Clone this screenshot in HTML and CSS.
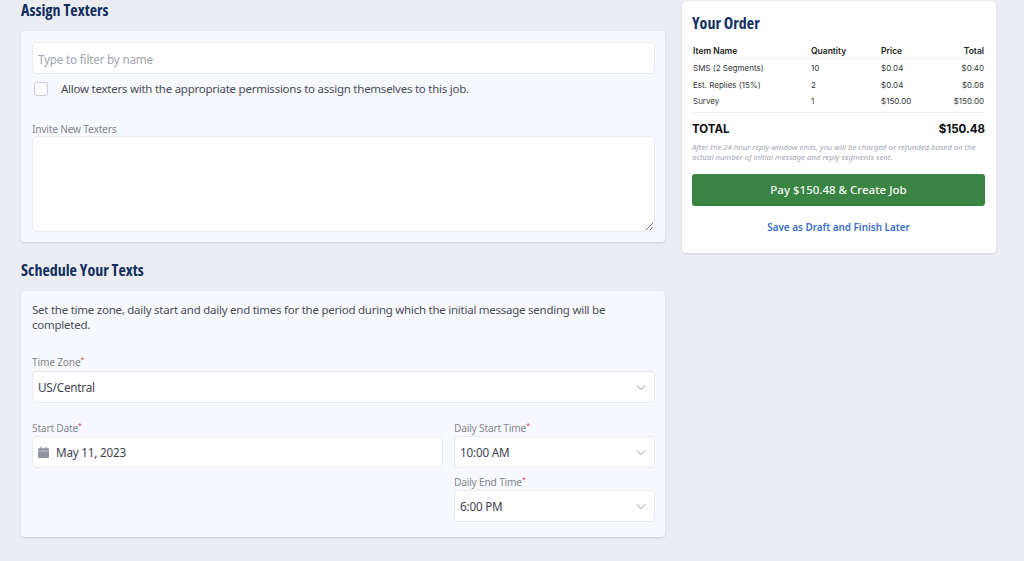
FILE: index.html
```html
<!DOCTYPE html>
<html lang="en">
<head>
<meta charset="utf-8">
<title>Create Job</title>
<link rel="stylesheet" href="styles.css">
</head>
<body>
<div class="layout">
  <main class="main">
    <h2 class="heading first">Assign Texters</h2>
    <section class="card assign">
      <input class="field" type="text" placeholder="Type to filter by name">
      <label class="check-row"><input class="check" type="checkbox"><span>Allow texters with the appropriate permissions to assign themselves to this job.</span></label>
      <div class="label invite-label">Invite New Texters</div>
      <textarea class="area"></textarea>
    </section>
    <h2 class="heading second">Schedule Your Texts</h2>
    <section class="card schedule">
      <p class="intro">Set the time zone, daily start and daily end times for the period during which the initial message sending will be completed.</p>
      <div class="label tz-label">Time Zone<sup class="req">*</sup></div>
      <div class="field select"><span>US/Central</span><svg class="chev" viewBox="0 0 12 8"><path d="M1 1.500 6 6.500 11 1.500" fill="none" stroke="#8b8f9c" stroke-width="1.100"/></svg></div>
      <div class="date-grid">
        <div>
          <div class="label">Start Date<sup class="req">*</sup></div>
          <div class="field date"><svg class="cal" viewBox="0 0 12 12"><path fill="#8f929f" d="M2.500 0h1.400v1.300h4.200V0h1.400v1.300H11a1 1 0 0 1 1 1V4H0V2.300a1 1 0 0 1 1-1h1.500zM0 4.700h12V11a1 1 0 0 1-1 1H1a1 1 0 0 1-1-1z"/></svg><span>May 11, 2023</span></div>
        </div>
        <div class="times">
          <div>
            <div class="label">Daily Start Time<sup class="req">*</sup></div>
            <div class="field select"><span>10:00 AM</span><svg class="chev" viewBox="0 0 12 8"><path d="M1 1.500 6 6.500 11 1.500" fill="none" stroke="#8b8f9c" stroke-width="1.100"/></svg></div>
          </div>
          <div>
            <div class="label">Daily End Time<sup class="req">*</sup></div>
            <div class="field select"><span>6:00 PM</span><svg class="chev" viewBox="0 0 12 8"><path d="M1 1.500 6 6.500 11 1.500" fill="none" stroke="#8b8f9c" stroke-width="1.100"/></svg></div>
          </div>
        </div>
      </div>
    </section>
  </main>
  <aside class="order">
    <h2 class="heading order-title">Your Order</h2>
    <table class="items">
      <thead>
        <tr><th class="c-name">Item Name</th><th class="c-qty">Quantity</th><th class="c-price">Price</th><th class="c-total">Total</th></tr>
      </thead>
      <tbody>
        <tr><td>SMS (2 Segments)</td><td>10</td><td>$0.04</td><td class="c-total">$0.40</td></tr>
        <tr><td>Est. Replies (15%)</td><td>2</td><td>$0.04</td><td class="c-total">$0.08</td></tr>
        <tr><td>Survey</td><td>1</td><td>$150.00</td><td class="c-total">$150.00</td></tr>
      </tbody>
    </table>
    <div class="total"><span>TOTAL</span><span>$150.48</span></div>
    <p class="note">After the 24 hour reply window ends, you will be charged or refunded based on the actual number of initial message and reply segments sent.</p>
    <button class="pay" type="button">Pay $150.48 &amp; Create Job</button>
    <a class="draft" href="#">Save as Draft and Finish Later</a>
  </aside>
</div>
</body>
</html>
```
FILE: styles.css
```css
* { box-sizing: border-box; }
html, body { height: 100%; }
body {
  margin: 0;
  height: 561px;
  overflow: hidden;
  background: #ecedf3;
  font-family: "Noto Sans", "Open Sans", sans-serif;
  color: #3f4350;
}
.layout {
  display: grid;
  grid-template-columns: 644px 314px;
  column-gap: 17px;
  align-items: start;
  padding: 1px 0 0 21px;
}
.heading {
  margin: 0;
  font-family: "Open Sans", sans-serif;
  font-stretch: 75%;
  font-weight: 700;
  font-size: 16px;
  line-height: 20px;
  color: #12305f;
}
.first { margin-bottom: 11px; margin-top: -1px; }
.second { margin: 18px 0 11px; }
.card {
  background: #f8f9fe;
  border-radius: 4px;
  box-shadow: 0 1px 2px rgba(60, 64, 90, .18);
  padding: 11px 10px 10px 11px;
}
.field {
  display: block;
  width: 100%;
  height: 32px;
  background: #fff;
  border: 1px solid #e8eaf1;
  border-radius: 4px;
  padding: 1px 5px 0;
  font-family: inherit;
  font-size: 11.700px;
  letter-spacing: -.2px;
  color: #3f4350;
  outline: none;
}
.field::placeholder { color: #a3a6b2; opacity: 1; }
.check-row {
  display: flex;
  align-items: center;
  gap: 13px;
  height: 15px;
  margin: 7px 0 0 2px;
  font-size: 11.500px;
  letter-spacing: -.25px;
  color: #484c58;
}
.check {
  appearance: none;
  flex: none;
  width: 14px;
  height: 14px;
  margin: 0;
  background: #fff;
  border: 1px solid #c9ccd6;
  border-radius: 3px;
}
.label {
  font-size: 10.200px;
  letter-spacing: -.2px;
  line-height: 14px;
  color: #83868f;
  margin-bottom: 1px;
}
.invite-label { margin-top: 26px; margin-bottom: 0; }
.area {
  display: block;
  width: 100%;
  height: 96px;
  background: #fff;
  border: 1px solid #e8eaf1;
  border-radius: 4px;
  outline: none;
  resize: vertical;
}
.schedule { padding-bottom: 15px; }
.intro {
  margin: 0;
  font-size: 11.500px;
  letter-spacing: -.25px;
  line-height: 15px;
  color: #484c58;
}
.tz-label { margin-top: 23px; margin-bottom: 2px; }
.req { color: #e5405e; font-size: 7px; line-height: 0; vertical-align: 4px; }
.select {
  display: flex;
  align-items: center;
  justify-content: space-between;
  padding-top: 0;
  padding-right: 8px;
}
.chev { width: 10px; height: 7px; flex: none; }
.date-grid {
  display: grid;
  grid-template-columns: 411px 201px;
  column-gap: 11px;
  margin-top: 18px;
}
.times { display: flex; flex-direction: column; gap: 7px; }
.date { display: flex; align-items: center; gap: 7px; padding-top: 0; }
.cal { width: 11px; height: 11px; flex: none; }
.order {
  height: 252px;
  background: #fff;
  border-radius: 4px;
  box-shadow: 0 1px 2px rgba(60, 64, 90, .15);
  padding: 12px 11px 0 10px;
}
.order-title { margin-bottom: 11px; }
.items {
  width: 100%;
  border-collapse: collapse;
  table-layout: fixed;
  font-family: Inter, "Liberation Sans", sans-serif;
  font-size: 8px;
  color: #33353b;
}
.items th, .items td { padding: 2px 1px 0; height: 17px; text-align: left; }
.items th { font-size: 8.500px; font-weight: 600; color: #1c1d21; height: 14px; padding: 0 1px; border-bottom: 1px solid #f0f1f4; }
.items tbody tr:last-child td { border-bottom: 1px solid #f0f1f4; height: 20px; padding-bottom: 3px; }
.items .c-name { width: 118px; }
.items .c-qty { width: 70px; }
.items .c-price { width: 55px; }
.items .c-total { text-align: right; }
.total {
  display: flex;
  justify-content: space-between;
  margin-top: 8px;
  font-family: Inter, "Liberation Sans", sans-serif;
  font-size: 11.500px;
  line-height: 16px;
  font-weight: 700;
  color: #0d0e12;
}
.note {
  margin: 5px 0 0;
  font-style: italic;
  font-size: 7.750px;
  line-height: 10.700px;
  color: #a3a6b2;
}
.pay {
  display: block;
  width: 100%;
  height: 32px;
  margin-top: 11px;
  border: 0;
  border-radius: 3px;
  background: #3a8443;
  color: #f4f8f4;
  font-family: inherit;
  font-size: 11.500px;
  font-weight: 500;
}
.draft {
  display: block;
  margin-top: 14px;
  text-align: center;
  font-size: 9.900px;
  line-height: 14px;
  font-weight: 600;
  color: #3a6fc9;
  text-decoration: none;
}
```
